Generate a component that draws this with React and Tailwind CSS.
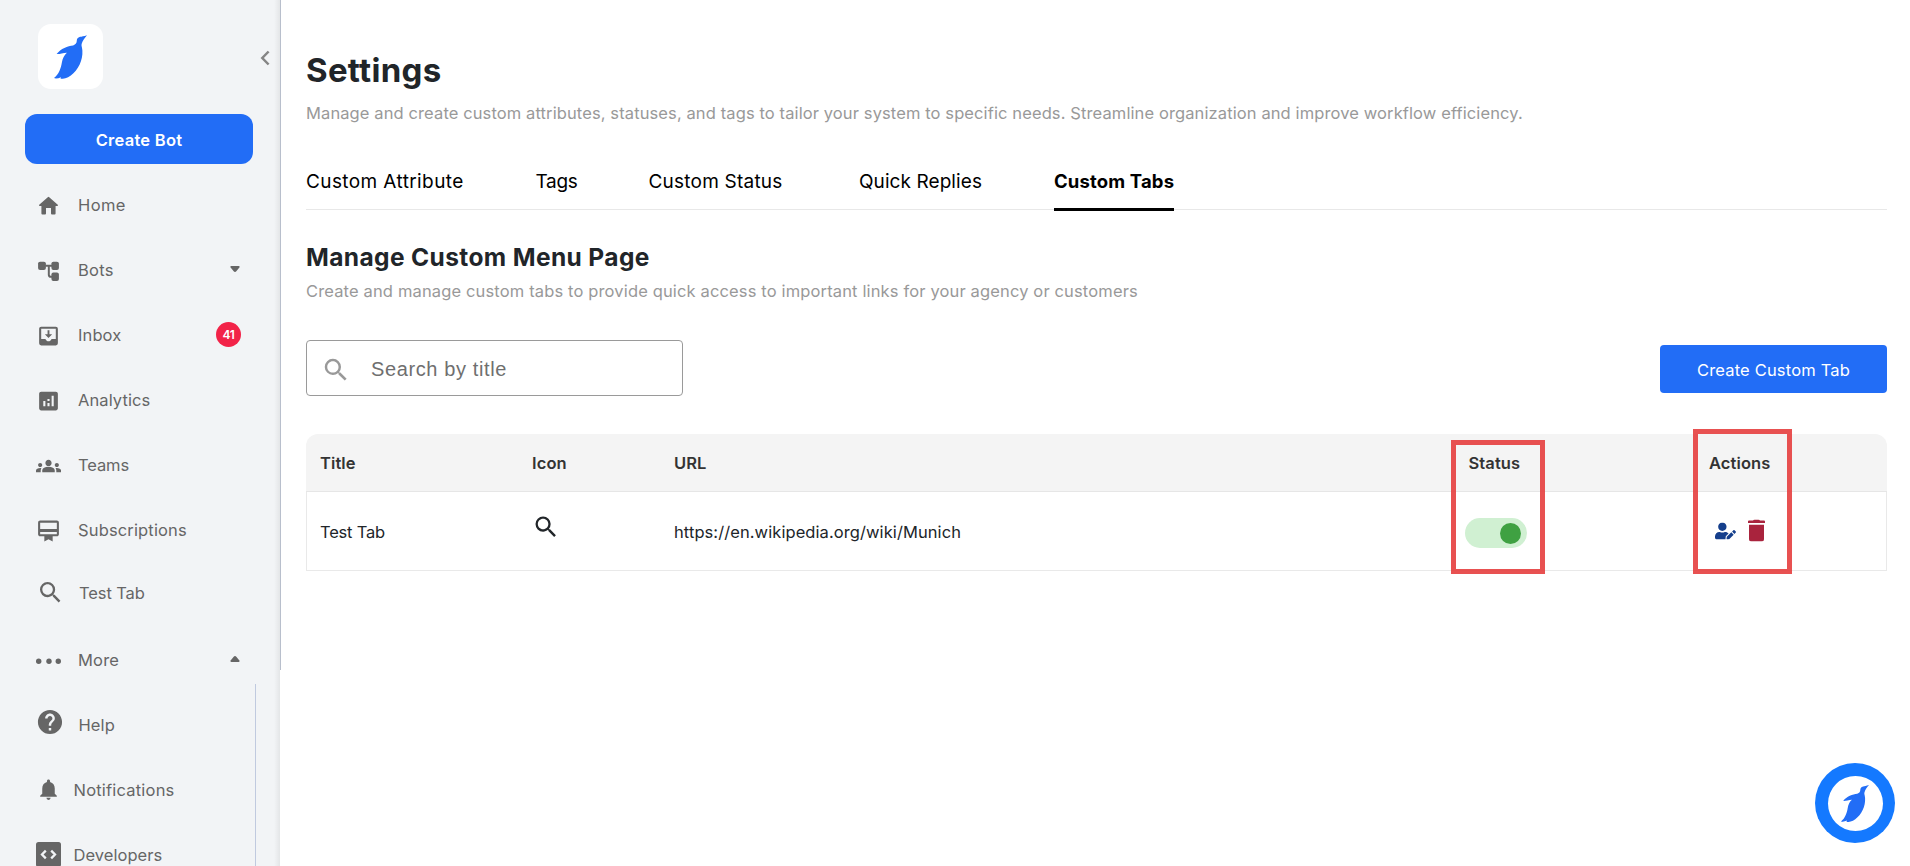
import {
  MdAnalytics,
  MdCardMembership,
  MdGroups,
  MdHelp,
  MdNotifications,
  MdSearch,
} from 'react-icons/md';
import { FaUserEdit } from 'react-icons/fa';

function Penguin({ className }) {
  return (
    <svg viewBox="0 0 100 132" className={className} fill="#226df6">
      <path d="M100 0 C90 3 84 4 79 5 C72 7 69 12 69 17 C69 24 66 28 58 31 C42 33 20 40 8 57 C16 58 26 54 39 53 C31 60 26 70 24 82 C21 100 15 118 0 130 C7 132 14 130 21 127 L20 132 C28 132 40 130 51 122 C73 105 88 76 86 46 C85 35 82 31 84 26 C87 16 92 9 100 0 Z" />
    </svg>
  );
}

function HomeIcon({ className }) {
  return (
    <svg viewBox="0 0 24 24" className={className} fill="currentColor">
      <path d="M11.3 3.5a1 1 0 0 1 1.4 0l8.2 7.4c.4.4.2 1-.4 1h-1.7v7.4c0 .6-.3.9-.9.9h-2.6c-.6 0-.9-.3-.9-.9v-5.4H9.6v5.4c0 .6-.3.9-.9.9H6.1c-.6 0-.9-.3-.9-.9v-7.4H3.5c-.6 0-.8-.6-.4-1z" />
    </svg>
  );
}

function TreeIcon({ className }) {
  return (
    <svg viewBox="0 0 24 24" className={className} fill="currentColor">
      <rect x="2" y="3" width="7.5" height="8" rx="1.9" />
      <rect x="14.8" y="3" width="7.2" height="8" rx="1.9" />
      <rect x="14.8" y="13.5" width="7.2" height="8" rx="1.9" />
      <path d="M9 7h7M12.3 7v8.5a2 2 0 0 0 2 2H16" fill="none" stroke="currentColor" strokeWidth="1.9" />
    </svg>
  );
}

function InboxIcon({ className }) {
  return (
    <svg viewBox="0 0 24 24" className={className} fill="currentColor">
      <path
        fillRule="evenodd"
        d="M5 3h14a2 2 0 0 1 2 2v14a2 2 0 0 1-2 2H5a2 2 0 0 1-2-2V5c0-1.1.9-2 2-2zm0 2v9.8h3.6c.5 0 .8.3 1 .7.5 1 1.4 1.5 2.4 1.5s1.9-.5 2.4-1.5c.2-.4.5-.7 1-.7H19V5z"
      />
      <path d="M11.1 6.5h1.8v3.8H15.5L12 14 8.5 10.3h2.6z" />
    </svg>
  );
}

function DotsIcon({ className }) {
  return (
    <svg viewBox="0 0 25 25" className={className} fill="currentColor">
      <circle cx="2.7" cy="12.8" r="2.7" />
      <circle cx="13" cy="12.8" r="2.7" />
      <circle cx="22.3" cy="12.8" r="2.7" />
    </svg>
  );
}

function CodeIcon({ className }) {
  return (
    <svg viewBox="0 0 25 25" className={className} fill="none">
      <rect width="25" height="25" rx="2.5" fill="currentColor" />
      <path d="M9.8 8.6 6 12.5l3.8 3.9M15.2 8.6l3.8 3.9-3.8 3.9" stroke="#f2f4f6" strokeWidth="2.3" />
    </svg>
  );
}

function Caret({ up }) {
  return (
    <svg viewBox="0 0 10 6" className={up ? 'h-[6px] w-[10px] rotate-180' : 'h-[6px] w-[10px]'} fill="#666">
      <path d="M1.3 0h7.4c1 0 1.3 1 .7 1.6L6.3 5.3c-.7.8-1.9.8-2.6 0L.6 1.6C0 1 .3 0 1.3 0z" />
    </svg>
  );
}

function TrashIcon({ className }) {
  return (
    <svg viewBox="0 0 17 22" className={className} fill="#a9233d">
      <path d="M5.5.6c.3-.4.6-.6 1-.6h4c.4 0 .7.2 1 .6l.4.4H16a1 1 0 0 1 1 1v1.5H0V2a1 1 0 0 1 1-1h4.1z" />
      <path d="M1 5.2h15V19.5a2.5 2.5 0 0 1-2.5 2.5h-10A2.5 2.5 0 0 1 1 19.5z" />
    </svg>
  );
}

const small = 'size-[25px]';

const items = [
  { label: 'Home', Icon: HomeIcon, icon: small, text: 'tracking-[0.4px]' },
  { label: 'Bots', Icon: TreeIcon, icon: small, text: 'tracking-[0.3px]', caret: 'down' },
  { label: 'Inbox', Icon: InboxIcon, icon: small, text: 'tracking-[0.1px]', badge: '41' },
  { label: 'Analytics', Icon: MdAnalytics, icon: small, text: 'tracking-[0.1px]' },
  { label: 'Teams', Icon: MdGroups, icon: small, text: 'tracking-[-0.1px]' },
  { label: 'Subscriptions', Icon: MdCardMembership, icon: small, text: 'tracking-[0.15px]' },
  { label: 'Test Tab', Icon: MdSearch, icon: 'size-[28px] translate-x-[1.5px] -translate-y-[4px]', text: 'tracking-[-0.1px] pl-px -translate-y-[2px]' },
  { label: 'More', Icon: DotsIcon, icon: small, text: 'tracking-[0.2px]', caret: 'up' },
];

const subItems = [
  { label: 'Help', Icon: MdHelp, icon: 'size-[29px] translate-x-[1.5px] -translate-y-[4px]', text: 'tracking-[0.1px] ml-[17.5px]' },
  { label: 'Notifications', Icon: MdNotifications, icon: 'size-[25px] -translate-y-[1.5px]', text: 'tracking-[0.2px] ml-[12.5px]' },
  { label: 'Developers', Icon: CodeIcon, icon: 'size-[25px] -translate-y-[1.5px]', text: 'tracking-[0.05px] ml-[12.5px]' },
];

function NavItem({ item, textGap }) {
  const { label, Icon, icon, text, caret, badge } = item;
  return (
    <a className="flex h-[65px] shrink-0 items-center pl-[36px] text-[16.5px] text-[#666]">
      <span className="flex size-[25px] shrink-0 translate-y-[1.5px] items-center justify-center">
        <Icon className={`shrink-0 ${icon}`} />
      </span>
      <span className={`pt-[1.5px] ${textGap} ${text}`}>{label}</span>
      {caret && (
        <span className="mr-[40px] ml-auto -translate-y-px">
          <Caret up={caret === 'up'} />
        </span>
      )}
      {badge && (
        <span className="mr-[39px] ml-auto flex size-[25px] items-center justify-center rounded-full bg-[#f22348] text-[12px] font-semibold tracking-[-0.3px] text-white">
          {badge}
        </span>
      )}
    </a>
  );
}

function Sidebar() {
  return (
    <aside className="relative flex h-full w-[280px] shrink-0 flex-col overflow-hidden bg-[#f2f4f6]">
      <div className="flex items-start justify-between pt-[24px] pr-[10px] pl-[38px]">
        <div className="flex size-[65px] items-center justify-center rounded-[13px] bg-white">
          <Penguin className="h-[44px] w-[33px]" />
        </div>
        <svg viewBox="0 0 10 16" className="mt-[26px] h-[16px] w-[10px]" fill="none" stroke="#858585" strokeWidth="2.5">
          <path d="M8.6 1.5 2.3 8l6.3 6.5" />
        </svg>
      </div>
      <button className="mt-[25px] ml-[25px] h-[50px] w-[228px] shrink-0 rounded-[12px] bg-[#226df6] pt-[2px] text-[16.5px] font-semibold tracking-[0.25px] text-white">
        Create Bot
      </button>
      <nav className="mt-[8px] flex flex-col">
        {items.map((item) => (
          <NavItem key={item.label} item={item} textGap="ml-[17px]" />
        ))}
        <div className="-mt-[8px] w-[256px] border-r border-[#c0cadf] pt-[8px]">
          {subItems.map((item) => (
            <NavItem key={item.label} item={item} textGap="" />
          ))}
        </div>
      </nav>
      <div className="absolute inset-y-0 right-0 w-[6px] bg-linear-to-r from-transparent to-black/6" />
    </aside>
  );
}

const tabs = [
  { label: 'Custom Attribute', cls: 'w-[229.5px] tracking-[0.4px]' },
  { label: 'Tags', cls: 'w-[113px] tracking-[-0.3px]' },
  { label: 'Custom Status', cls: 'w-[210.5px] tracking-[0.22px]' },
  { label: 'Quick Replies', cls: 'w-[195px] tracking-[0.08px]' },
];

function Main() {
  return (
    <main className="relative flex min-w-0 flex-1 flex-col pt-[50px] pr-[23px] pl-[25px]">
      <h1 className="h-[40px] text-[33px] leading-[40px] font-bold tracking-[0.3px] text-[#212529]">Settings</h1>
      <p className="mt-[10px] h-[26px] text-[16.5px] leading-[26px] tracking-[0.11px] text-[#999]">
        Manage and create custom attributes, statuses, and tags to tailor your system to specific needs. Streamline
        organization and improve workflow efficiency.
      </p>
      <div className="mt-[28px] flex h-[56px] items-stretch border-b border-[#e8e8e8] text-[19px] text-black">
        {tabs.map((tab) => (
          <div key={tab.label} className={`flex items-center pt-[2px] ${tab.cls}`}>
            {tab.label}
          </div>
        ))}
        <div className="relative flex w-[120px] items-center text-[18.5px] font-bold tracking-[0.15px] whitespace-nowrap">
          Custom Tabs
          <span className="absolute -bottom-[2px] left-0 h-[3px] w-full bg-black" />
        </div>
      </div>
      <h2 className="mt-[32px] h-[31px] text-[24.5px] leading-[31px] font-bold tracking-[0.38px] text-[#212529]">
        Manage Custom Menu Page
      </h2>
      <p className="mt-[6px] h-[24px] text-[16.5px] leading-[24px] tracking-[0.145px] text-[#999]">
        Create and manage custom tabs to provide quick access to important links for your agency or customers
      </p>
      <div className="mt-[37px] flex h-[56px] justify-between">
        <div className="flex w-[377px] items-center rounded-[4px] border border-[#9a9a9a] pl-[14px]">
          <MdSearch className="size-[30px] translate-y-[2px] text-[#999]" />
          <span className="ml-[20px] pt-[2px] font-['Liberation_Sans',sans-serif] text-[20px] tracking-[0.62px] text-[#6f6f6f]">
            Search by title
          </span>
        </div>
        <button className="mt-[5px] h-[48px] w-[227px] rounded-[4px] bg-[#226df6] pt-[2px] text-[16.5px] tracking-[0.17px] text-white">
          Create Custom Tab
        </button>
      </div>
      <div className="mt-[38px]">
        <div className="grid h-[58px] grid-cols-[212px_142px_794.5px_240.5px_1fr] items-center rounded-t-[12px] border-b border-[#e6e6e6] bg-[#f4f4f4] pt-px pl-[14px] text-[16.5px] font-semibold tracking-[0.1px] text-[#333]">
          <span>Title</span>
          <span>Icon</span>
          <span>URL</span>
          <span>Status</span>
          <span>Actions</span>
        </div>
        <div className="grid h-[79px] grid-cols-[212px_142px_795px_240px_1fr] items-center border-x border-b border-[#e9e9e9] pl-[13px] text-[16.5px] text-[#212529]">
          <span className="pt-[2px] tracking-[-0.19px]">Test Tab</span>
          <MdSearch className="size-[28px] -translate-y-[4px]" />
          <span className="pt-[2px] tracking-[0.08px]">https://en.wikipedia.org/wiki/Munich</span>
          <span className="-ml-[4px] flex h-[30px] w-[62px] translate-y-[2px] items-center justify-end rounded-full bg-[#d0f0d2] pr-[6px]">
            <span className="size-[21px] rounded-full bg-[#3fa142]" />
          </span>
          <span className="flex -translate-y-[0.5px] items-center pl-[6px]">
            <FaUserEdit className="h-[17px] w-[21px] text-[#153f8c]" />
            <TrashIcon className="ml-[12px] h-[22px] w-[17px]" />
          </span>
        </div>
      </div>
    </main>
  );
}

export default function App() {
  return (
    <div className="relative flex h-[866px] w-[1910px] overflow-hidden bg-white font-[Inter,sans-serif]">
      <Sidebar />
      <div className="h-[670px] w-px shrink-0 bg-[#b8bfcc]" />
      <Main />
      <div className="absolute top-[440px] left-[1451px] h-[134px] w-[94px] border-[5px] border-[#e53e3e]/90" />
      <div className="absolute top-[429px] left-[1693px] h-[145px] w-[99px] border-[5px] border-[#e53e3e]/90" />
      <div className="absolute top-[763px] left-[1815px] flex size-[80px] items-center justify-center rounded-full bg-[#1479ff]">
        <div className="flex size-[55px] items-center justify-center rounded-full bg-white">
          <Penguin className="h-[37px] w-[28px]" />
        </div>
      </div>
    </div>
  );
}
